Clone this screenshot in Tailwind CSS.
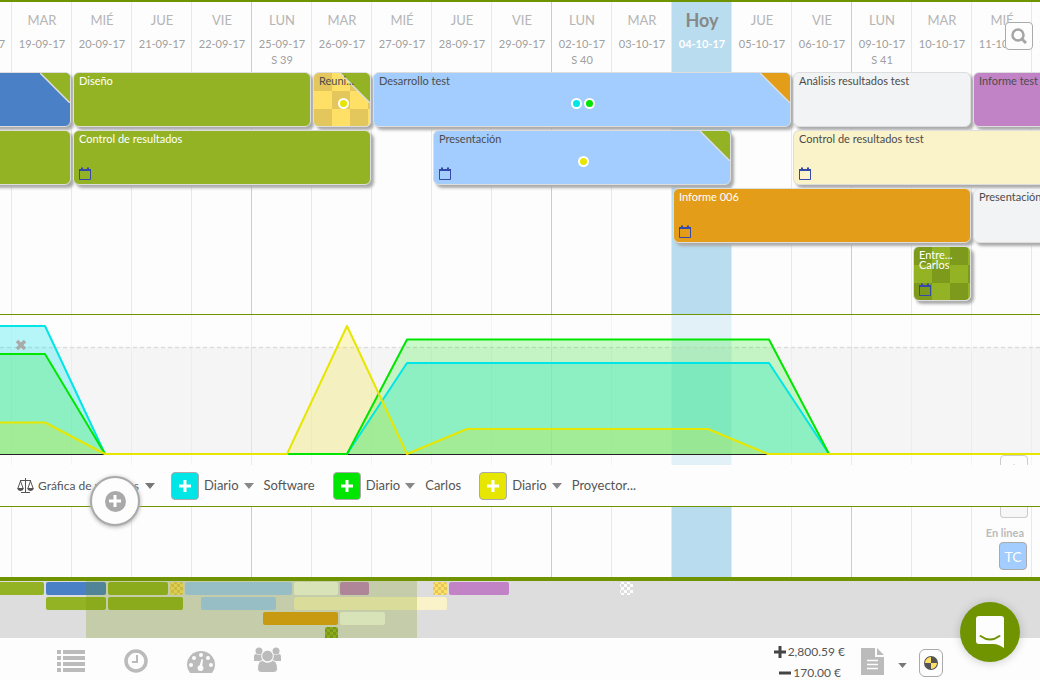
<!DOCTYPE html>
<html lang="es">

<head>
    <meta charset="UTF-8">
    <meta name="viewport" content="width=device-width, initial-scale=1.0">
    <title>Planificador</title>
    <script src="https://cdn.jsdelivr.net/npm/@tailwindcss/browser@4"></script>
</head>

<body class="bg-[#fdfdfd] font-['Lato',sans-serif] text-[#555]">
    <svg class="hidden">
        <symbol id="calendar" viewBox="0 0 12 13">
            <path d="M.5 3.5h11v9H.5z" fill="none" stroke="#3449a8" />
            <path d="M0 4V2h2V.5h2V2h4V.5h2V2h2v2z" fill="#3449a8" />
        </symbol>
        <symbol id="caret" viewBox="0 0 10 6">
            <path d="M0 0h10L5 6z" fill="currentColor" />
        </symbol>
        <symbol id="plus" viewBox="0 0 14 14">
            <path d="M5.500 1h3v4.500H13v3H8.500V13h-3V8.500H1v-3h4.500z" fill="currentColor" />
        </symbol>
    </svg>

    <div class="flex h-screen flex-col overflow-hidden">
        <main class="relative grid min-h-0 flex-1 grid-cols-1 overflow-hidden border-t-2 border-[#6f9400]">
            <!-- Columnas de días -->
            <div id="days" class="col-start-1 row-start-1 -ml-[49px] flex"></div>

            <div class="z-10 col-start-1 row-start-1 flex min-w-0 flex-col pt-[70px]">
                <div id="tasks" class="-ml-[49px] grid flex-1 auto-rows-[58px] grid-cols-[repeat(19,60px)]"></div>

                <section class="relative border-y border-[#6f9400]">
                    <div class="relative h-[150px] overflow-hidden bg-[#fdfdfd]/60">
                        <svg class="block h-[150px] w-full" fill="none">
                            <rect y="32" width="100%" height="107" fill="#998888" fill-opacity=".07" />
                            <path d="M0 32.5H4000" stroke="#ddd" stroke-width="1.5" stroke-dasharray="4 3" />
                            <path d="M0 139.5H4000" stroke="#222" />
                            <path d="M-5 139V11H45L105 139H347L407 48H769L829 139z" fill="#00e5ee" fill-opacity=".28" />
                            <path d="M-5 139V39H45L105 139H347L407 24.500H769L829 139z" fill="#00f000" fill-opacity=".2" />
                            <path d="M-5 139V107.500H45L105 139H287L347 11L407 139L467 114H708L768 139z" fill="#f0e000" fill-opacity=".22" />
                            <g stroke-width="2" stroke-linejoin="round">
                                <path d="M-5 11H45L105 139H347L407 48H769L829 139H4000" stroke="#00e5e5" />
                                <path d="M-5 39H45L105 139H347L407 24.500H769L829 139H4000" stroke="#00e600" />
                                <path d="M-5 107.500H45L105 139H287L347 11L407 139L467 114H708L768 139H4000" stroke="#e6e600" />
                            </g>
                        </svg>
                        <button class="absolute top-6 left-[15px] text-[#aaa]" aria-label="Cerrar gráfica">
                            <svg class="size-3" viewBox="0 0 12 12"><path d="M2 2l8 8M10 2l-8 8" stroke="currentColor" stroke-width="3.500" /></svg>
                        </button>
                        <button class="absolute top-[140px] right-3 flex h-7 w-7 justify-center rounded border border-[#ccc] bg-[#fdfdfd] pt-2" aria-label="Subir">
                            <svg class="h-1.5 w-2.5 rotate-180 text-[#bbb]"><use href="#caret" /></svg>
                        </button>
                    </div>

                    <div class="flex h-[41px] items-center bg-[#fdfdfd] pl-[17px] text-[13px]">
                        <button class="flex items-center text-xs">
                            <svg class="mr-1 h-4 w-[17px]" viewBox="0 0 17 16" fill="none" stroke="#555">
                                <path d="M8.500 0v14M4 14.500h9M3 2.500h11M3.500 3L1 10M3.500 3L6 10M13.500 3L11 10M13.500 3L16 10" />
                                <path d="M0 10h7q-1 3-3.500 3T0 10zM10 10h7q-1 3-3.500 3T10 10z" fill="#555" stroke="none" />
                            </svg>
                            <span class="w-[101px] text-left whitespace-nowrap">Gráfica de recursos</span>
                            <svg class="ml-1.5 h-1.5 w-2.5 text-[#777]"><use href="#caret" /></svg>
                        </button>
                        <div id="legend" class="ml-4 flex items-center gap-[18px]"></div>
                    </div>

                    <button class="absolute top-[161px] left-[90px] flex size-[50px] items-center justify-center rounded-full border-2 border-[#aaa] bg-[#fdfdfd] shadow-[0_1px_4px_#aaa]" aria-label="Añadir">
                        <span class="flex size-[21px] items-center justify-center rounded-full bg-[#a9a9a9] text-white">
                            <svg class="size-3.5"><use href="#plus" /></svg>
                        </span>
                    </button>
                </section>

                <aside class="flex h-[70px] flex-col items-end pr-3">
                    <div class="h-[11px] w-7 rounded-b border border-t-0 border-[#ccc] bg-[#f7f7f7]"></div>
                    <span class="mt-[7px] mr-1 text-[11px] leading-4 font-bold text-[#bbb]">En linea</span>
                    <button class="mt-px mr-px h-7 w-7 rounded border border-[#aaa] bg-[#a3ccff] pt-0.5 text-sm leading-none text-white">TC</button>
                </aside>
            </div>

            <button class="absolute top-5 right-[7px] z-20 flex size-7 items-center justify-center rounded border border-[#aaa] bg-[#fdfdfd]" aria-label="Buscar">
                <svg class="size-4" viewBox="0 0 16 16" fill="none" stroke="#a5a5a5">
                    <circle cx="7" cy="7" r="5.500" stroke-width="2.500" />
                    <path d="M11 11l4 4" stroke-width="3" />
                </svg>
            </button>
        </main>

        <!-- Minimapa -->
        <div class="border-t-4 border-[#6f9400] bg-[#ddd]">
            <svg class="block h-[57px] w-full">
                <defs>
                    <pattern id="checkYellow" width="6" height="6" patternUnits="userSpaceOnUse">
                        <path d="M0 0h6v6H0z" fill="#ffe066" /><path d="M0 0h3v3H0zM3 3h3v3H3z" fill="#e3c65c" />
                    </pattern>
                    <pattern id="checkGreen" width="6" height="6" patternUnits="userSpaceOnUse">
                        <path d="M0 0h6v6H0z" fill="#93b325" /><path d="M0 0h3v3H0zM3 3h3v3H3z" fill="#7d9a1c" />
                    </pattern>
                    <pattern id="checkWhite" width="6" height="6" patternUnits="userSpaceOnUse">
                        <path d="M0 0h6v6H0z" fill="#fdfdfd" /><path d="M0 0h3v3H0zM3 3h3v3H3z" fill="#ddd" />
                    </pattern>
                </defs>
                <g id="minimap"></g>
                <rect x="86" width="331" height="57" fill="#709200" fill-opacity=".23" />
            </svg>
        </div>

        <footer class="flex h-[42px] shrink-0 items-center bg-[#fdfdfd] pl-[57px] text-[#bbb]">
            <nav class="mt-1 flex items-center gap-[39px]">
                <button aria-label="Lista">
                    <svg class="h-[22px] w-7" viewBox="0 0 28 22" fill="currentColor">
                        <path d="M0 0h4v4H0zM6 0h22v4H6zM0 6h4v4H0zM6 6h22v4H6zM0 12h4v4H0zM6 12h22v4H6zM0 18h4v4H0zM6 18h22v4H6z" />
                    </svg>
                </button>
                <button aria-label="Horas">
                    <svg class="size-6" viewBox="0 0 24 24" fill="none" stroke="currentColor">
                        <circle cx="12" cy="12" r="10" stroke-width="3.500" />
                        <path d="M13 6v7H8" stroke-width="2" />
                    </svg>
                </button>
                <button aria-label="Panel">
                    <svg class="mt-0.5 h-[22px] w-7" viewBox="0 0 28 22">
                        <path d="M3 22Q0 18 0 14a14 14 0 0 1 28 0q0 4-3 8z" fill="currentColor" />
                        <g fill="#fdfdfd">
                            <circle cx="4" cy="14" r="2" /><circle cx="7" cy="7" r="2" /><circle cx="14" cy="4" r="2" />
                            <circle cx="21" cy="7" r="2" /><circle cx="24" cy="14" r="2" />
                            <path d="M14.500 8l1.500.500-.700 6.200a3 3 0 1 1-2.500-.500z" />
                        </g>
                    </svg>
                </button>
                <button aria-label="Equipo">
                    <svg class="-mt-1 h-[25px] w-[27px]" viewBox="0 0 27 25">
                        <g fill="currentColor">
                            <circle cx="5" cy="4" r="3.500" /><circle cx="22" cy="4" r="3.500" />
                            <path d="M0 14V10q0-3 2-3 3 2 6 0-1 4 1 7zM27 14V10q0-3-2-3-3 2-6 0 1 4-1 7z" />
                        </g>
                        <g fill="currentColor" stroke="#fdfdfd">
                            <circle cx="13.500" cy="9" r="5.800" />
                            <path d="M3.500 22q0-8.500 5-8.500 5 3.500 10 0 5 0 5 8.500 0 3.500-3.500 3.500H7q-3.500 0-3.500-3.500z" />
                        </g>
                    </svg>
                </button>
            </nav>

            <div class="ml-auto flex items-center pr-[97px]">
                <dl class="mt-1.5 flex flex-col items-end text-xs leading-[21px] text-[#555]">
                    <div class="flex items-center gap-0.5">
                        <dt aria-label="Ingresos"><svg class="size-3" viewBox="0 0 12 12"><path d="M6 0v12M0 6h12" stroke="#444" stroke-width="3" /></svg></dt>
                        <dd>2,800.59 €</dd>
                    </div>
                    <div class="mr-1 flex items-center gap-0.5">
                        <dt aria-label="Gastos"><svg class="size-3" viewBox="0 0 12 12"><path d="M0 6h12" stroke="#444" stroke-width="3" /></svg></dt>
                        <dd>170.00 €</dd>
                    </div>
                </dl>
                <button class="ml-4 flex items-center" aria-label="Documentos">
                    <svg class="mt-1 h-[27px] w-[23px]" viewBox="0 0 23 27">
                        <path d="M0 0h14v9h9v18H0zM16 0l7 7h-7z" fill="currentColor" />
                        <path d="M6 12.500h11M6 16.500h11M6 20.500h11" stroke="#fdfdfd" stroke-width="1.500" />
                    </svg>
                    <svg class="mt-3 ml-3.5 h-[5px] w-[9px] text-[#777]"><use href="#caret" /></svg>
                </button>
                <button class="mt-2 ml-3 flex h-7 w-6 items-center justify-center rounded-md border border-[#aaa]" aria-label="Estado">
                    <svg class="size-3.5" viewBox="0 0 14 14">
                        <circle cx="7" cy="7" r="7" fill="#555" />
                        <path d="M7 7V1a6 6 0 0 0-6 6zM7 7v6a6 6 0 0 0 6-6z" fill="#ffe066" />
                    </svg>
                </button>
            </div>
        </footer>
    </div>

    <button class="fixed right-5 bottom-[18px] z-30 flex size-15 items-center justify-center rounded-full bg-[#6f9400] shadow-[0_1px_10px_rgba(0,0,0,0.2)]" aria-label="Chat">
        <svg class="h-8 w-7" viewBox="0 0 28 32">
            <path d="M3 0h22q3 0 3 3v29q-6-4-10-4H3q-3 0-3-3V3q0-3 3-3z" fill="#fdfdfd" />
            <path d="M4.500 20q9.500 7 19 0" fill="none" stroke="#6f9400" stroke-width="2" stroke-linecap="round" />
        </svg>
    </button>

    <script>
        const days = [
            ['LUN', '18-09-17'], ['MAR', '19-09-17'], ['MIÉ', '20-09-17'], ['JUE', '21-09-17'], ['VIE', '22-09-17'],
            ['LUN', '25-09-17', 'S 39'], ['MAR', '26-09-17'], ['MIÉ', '27-09-17'], ['JUE', '28-09-17'], ['VIE', '29-09-17'],
            ['LUN', '02-10-17', 'S 40'], ['MAR', '03-10-17'], ['Hoy', '04-10-17'], ['JUE', '05-10-17'], ['VIE', '06-10-17'],
            ['LUN', '09-10-17', 'S 41'], ['MAR', '10-10-17'], ['MIÉ', '11-10-17'], ['JUE', '12-10-17']
        ];

        document.getElementById('days').innerHTML = days.map(([name, date, week]) => {
            const today = name === 'Hoy';
            const line = week ? 'border-[#ccc]' : 'border-[#e8e8e8]';
            return `
                <div class="w-15 shrink-0 border-l pt-2 pl-px text-center whitespace-nowrap ${line} ${today ? 'bg-[#b9dcee]' : ''}">
                    <div class="leading-5 ${today ? 'text-lg font-bold text-[#888]' : 'text-[13px] text-[#b5b5b5]'}">${name}</div>
                    <div class="mt-1 text-[11px] leading-5 ${today ? 'font-bold text-white' : 'text-[#a0a0a0]'}">${date}</div>
                    <div class="text-[11px] leading-3 text-[#a0a0a0]">${week || ''}</div>
                </div>`;
        }).join('');

        const styles = {
            blue: 'bg-[#4a80c6] text-white',
            green: 'bg-[#93b325] text-white',
            sky: 'bg-[#a3ccff] text-[#4c4c4c]',
            grey: 'bg-[#f1f3f5] text-[#4c4c4c]',
            purple: 'bg-[#c183c6] text-[#4c4c4c]',
            cream: 'bg-[#faf2c8] text-[#4c4c4c]',
            orange: 'bg-[#e39d18] text-white',
            yellowCheck: 'bg-[repeating-conic-gradient(#ffe066_0_25%,#e3c65c_0_50%)] bg-size-[36px_36px] text-[#4c4c4c]',
            greenCheck: 'bg-[repeating-conic-gradient(#93b325_0_25%,#7d9a1c_0_50%)] bg-size-[36px_36px] text-white'
        };

        // row, start y end son líneas de la rejilla de días
        const tasks = [
            { row: 1, start: 1, end: 3, style: 'blue', corner: '#93b325' },
            { row: 1, start: 3, end: 7, style: 'green', title: 'Diseño' },
            { row: 1, start: 7, end: 8, style: 'yellowCheck', title: 'Reuni...', corner: '#93b325', dots: ['#e6e600'] },
            { row: 1, start: 8, end: 15, style: 'sky', title: 'Desarrollo test', corner: '#e39d18', dots: ['#00e5e5', '#00e600'] },
            { row: 1, start: 15, end: 18, style: 'grey', title: 'Análisis resultados test' },
            { row: 1, start: 18, end: 20, style: 'purple', title: 'Informe test' },
            { row: 2, start: 1, end: 3, style: 'green' },
            { row: 2, start: 3, end: 8, style: 'green', title: 'Control de resultados', calendar: true },
            { row: 2, start: 9, end: 14, style: 'sky', title: 'Presentación', corner: '#93b325', dots: ['#e6e600'], calendar: true },
            { row: 2, start: 15, end: 20, style: 'cream', title: 'Control de resultados test', calendar: true },
            { row: 3, start: 13, end: 18, style: 'orange', title: 'Informe 006', calendar: true },
            { row: 3, start: 18, end: 20, style: 'grey', title: 'Presentación' },
            { row: 4, start: 17, end: 18, style: 'greenCheck', title: 'Entre...<br>Carlos', calendar: true }
        ];

        document.getElementById('tasks').innerHTML = tasks.map(t => `
            <div class="relative mb-[3px] ml-0.5 rounded-md border border-[#ddd] pt-[3px] pl-[5px] shadow-[3px_3px_3px_#aaa] ${styles[t.style]}" style="grid-area: ${t.row} / ${t.start} / auto / ${t.end}">
                ${t.corner ? `<svg class="absolute top-0 right-0 size-[30px] rounded-tr-[5px]" viewBox="0 0 30 30"><path d="M0 0h30v30z" fill="${t.corner}" /><path d="M0 0l30 30" stroke="#ddd" stroke-width="1.500" /></svg>` : ''}
                <div class="relative h-2.5 text-[11px] leading-[10px] whitespace-nowrap">${t.title || ''}</div>
                ${t.dots ? `<div class="mt-3 -ml-[3px] flex justify-center gap-0.5">${t.dots.map(c => `<span class="size-[11px] rounded-full border-2 border-white" style="background: ${c}"></span>`).join('')}</div>` : ''}
                ${t.calendar ? '<svg class="absolute bottom-1 left-[5px] h-[13px] w-3"><use href="#calendar" /></svg>' : ''}
            </div>`).join('');

        const resources = [['Software', '#00e5e5'], ['Carlos', '#00e600'], ['Proyector...', '#e6e600']];

        document.getElementById('legend').innerHTML = resources.map(([name, color]) => `
            <div class="flex items-center">
                <button class="flex size-7 items-center justify-center rounded border border-[#aaa] text-white" style="background: ${color}" aria-label="Añadir ${name}">
                    <svg class="size-3.5"><use href="#plus" /></svg>
                </button>
                <label class="ml-[5px] flex items-center">
                    <select class="field-sizing-content appearance-none" aria-label="Periodo de ${name}"><option>Diario</option></select>
                    <svg class="ml-[5px] h-1.5 w-2.5 text-[#888]"><use href="#caret" /></svg>
                </label>
                <span class="ml-2.5">${name}</span>
            </div>`).join('');

        // [fila, x, ancho, relleno]
        const mini = [
            [0, -4, 48, '#93b325'], [0, 46, 60, '#4a80c6'], [0, 108, 60, '#93b325'], [0, 170, 13, 'url(#checkYellow)'],
            [0, 185, 107, '#a3ccff'], [0, 294, 44, '#f8fbf0'], [0, 340, 29, '#c183c6'], [0, 433, 14, 'url(#checkYellow)'],
            [0, 449, 60, '#c183c6'], [0, 620, 13, 'url(#checkWhite)'],
            [1, 46, 60, '#93b325'], [1, 108, 75, '#93b325'], [1, 201, 75, '#a3ccff'], [1, 294, 153, '#faf2c8'],
            [2, 263, 75, '#e39d18'], [2, 340, 45, '#f8fbf0'],
            [3, 325, 13, 'url(#checkGreen)']
        ];

        document.getElementById('minimap').innerHTML = mini.map(([row, x, width, fill]) =>
            `<rect x="${x}" y="${row * 15 + 1}" width="${width}" height="13" rx="2" fill="${fill}" />`
        ).join('');
    </script>
</body>

</html>
